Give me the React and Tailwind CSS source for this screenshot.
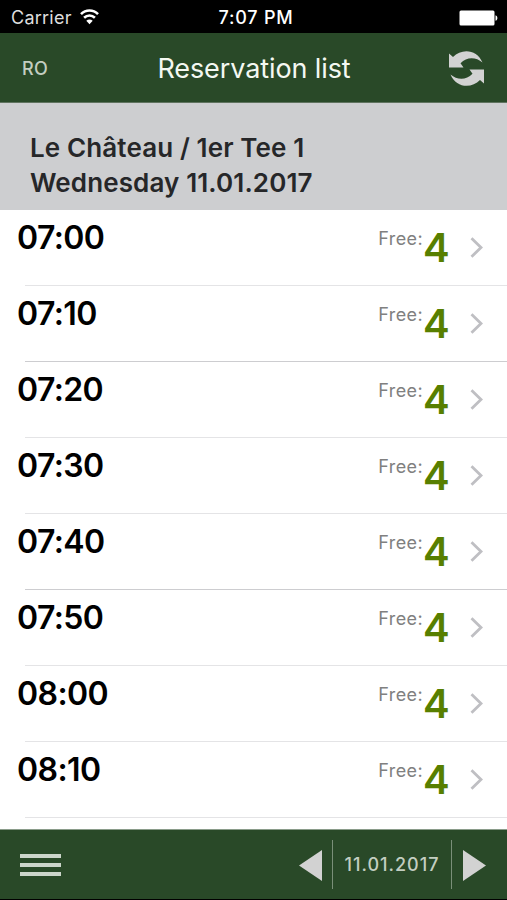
const TIMES = ['07:00', '07:10', '07:20', '07:30', '07:40', '07:50', '08:00', '08:10']

function StatusBar() {
  return (
    <div className="h-[33px] shrink-0 bg-black text-white flex items-start justify-between pl-[11px] pr-[9px] leading-[36px]">
      <div className="flex-1 flex items-start">
        <span className="text-[18px] tracking-[0.25px] text-[#dedede]">Carrier</span>
        <svg className="ml-[8px] mt-[9px] w-[19px] h-[16px]" viewBox="0 0 19 16" fill="none" stroke="#fff" strokeWidth="2.6">
          <path d="M1 5.2C5.8 .3 13.2 .3 18 5.2" />
          <path d="M4.1 8.7C7.2 5.7 11.8 5.7 14.9 8.7" />
          <path d="M9.5 15.3L6.3 11.8C8.1 10.1 10.9 10.1 12.7 11.8Z" fill="#fff" stroke="none" />
        </svg>
      </div>
      <span className="pl-[3px] text-[18px] font-medium tracking-[0.8px]">7:07 PM</span>
      <div className="flex-1 flex justify-end">
        <svg className="mt-[10px] w-[39px] h-[16px]" viewBox="0 0 39 16" fill="#fff">
          <rect x="0.5" y="0.5" width="35" height="15" rx="1.5" />
          <path d="M36.5 5.2C39 5.8 39 10.2 36.5 10.8Z" />
        </svg>
      </div>
    </div>
  )
}

function Header() {
  return (
    <header className="h-[70px] shrink-0 bg-[#294928] border-b border-[#5f735f] flex items-center pl-[22px] pr-[23px]">
      <button className="flex-1 pt-[2px] text-left text-[18px] tracking-[0.3px] font-medium text-[#c3cec1]">RO</button>
      <h1 className="pt-[2px] pl-[2px] text-[27px] leading-[34px] tracking-[-0.1px] text-[#f4f8f2]">Reservation list</h1>
      <div className="flex-1 flex justify-end">
        <svg className="mt-[2px] w-[35px] h-[37px]" viewBox="0 0 35 37" fill="#d2d2d2">
          <path d="M0 3.5L4 7C12.500 -2 28 -1 33.5 12.5C27 7 18 6.500 11.500 13.200L14.500 17.500H0Z" />
          <path d="M35 33.5L31 30C22.500 39 7 38 1.5 24.5C8 30 17 30.500 23.500 23.800L20.5 19.5H35Z" />
        </svg>
      </div>
    </header>
  )
}

function SlotRow({ time, free, dark }) {
  return (
    <li className="h-[76px] shrink-0 flex flex-col">
      <div className="flex-1 flex items-start pl-[17px] pr-[24px]">
        <span className="flex-1 mt-[8px] text-[32px] leading-[39px] tracking-[-0.6px] font-semibold text-black">{time}</span>
        <span className="mt-[17px] text-[18px] leading-[24px] tracking-[0.4px] text-[#808080]">Free:</span>
        <span className="mt-[14px] w-[26px] text-[40px] leading-[48px] font-semibold text-[#587f00]">{free}</span>
        <svg className="ml-[21px] mt-[27px] w-[13px] h-[21px]" viewBox="0 0 13 21" fill="none" stroke="#bfbfc3" strokeWidth="2.8">
          <path d="M1.5 1.2L11 10.5L1.5 19.8" />
        </svg>
      </div>
      <div className={dark ? 'ml-[25px] h-px bg-[#cdcdd0]' : 'ml-[25px] h-px bg-[#e4e4e6]'} />
    </li>
  )
}

function Footer() {
  return (
    <footer className="h-[71px] shrink-0 bg-[#294928] border-t border-[#8a9c8a] border-b border-b-black flex items-center pl-[20px] pr-[21px]">
      <div className="flex-1 flex flex-col gap-[5px]">
        <div className="w-[41px] h-[4px] bg-[#ccd6cb]" />
        <div className="w-[41px] h-[4px] bg-[#ccd6cb]" />
        <div className="w-[41px] h-[4px] bg-[#ccd6cb]" />
      </div>
      <svg className="mt-[2px] w-[23px] h-[31px]" viewBox="0 0 23 31" fill="#d2d2d2">
        <path d="M23 0V31L0 15.5Z" />
      </svg>
      <div className="ml-[10px] w-[120px] h-[49px] border-x border-[#7a8f79] flex items-center justify-center text-[18px] tracking-[1px] font-medium text-[#c3cec1]">
        11.01.2017
      </div>
      <svg className="mt-[2px] ml-[11px] w-[23px] h-[31px]" viewBox="0 0 23 31" fill="#d2d2d2">
        <path d="M0 0V31L23 15.5Z" />
      </svg>
    </footer>
  )
}

export default function App() {
  return (
    <div className="w-[507px] h-[900px] overflow-hidden bg-white flex flex-col font-['Inter',sans-serif]">
      <StatusBar />
      <Header />
      <div className="h-[107px] shrink-0 bg-[#cdced0] pl-[30px] pt-[27px] text-[26px] leading-[35px] tracking-[0.12px] font-semibold text-[#262729]">
        <div>Le Château / 1er Tee 1</div>
        <div>Wednesday 11.01.2017</div>
      </div>
      <ul className="flex-1 min-h-0 overflow-hidden flex flex-col">
        {TIMES.map((t, i) => (
          <SlotRow key={t} time={t} free={4} dark={i % 3 === 1 && i < 6} />
        ))}
      </ul>
      <Footer />
    </div>
  )
}
